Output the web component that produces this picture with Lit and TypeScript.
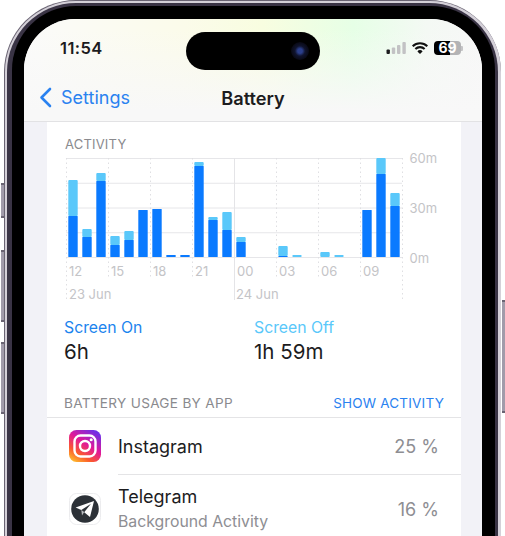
import { LitElement, html, css, svg } from "lit";
import { customElement } from "lit/decorators.js";

// [minutes-ish heights in px] dark = screen on, light = screen off (total stack)
const BARS: [number, number][] = [
  [41, 77], [20, 28], [76, 84], [12, 21], [17, 26], [47, 47], [48, 48], [2, 2],
  [2, 2], [91, 95], [37, 40], [27, 45], [15, 20], [0, 0], [0, 0], [1, 11],
  [0, 2], [0, 0], [0, 5], [0, 2], [0, 0], [47, 47], [83, 99], [51, 64],
];

const TOP = 8;
const BASE = 107;
const LEFT = 1;
const STEP = 14;

@customElement("activity-chart")
class ActivityChart extends LitElement {
  static styles = css`
    :host {
      display: block;
    }
    svg {
      display: block;
    }
    .h {
      stroke: #e6e6e9;
      stroke-width: 1;
    }
    .v {
      stroke: #dfdfe2;
      stroke-width: 1;
      stroke-dasharray: 1.5 3;
    }
    .solid {
      stroke: #e4e4e7;
      stroke-width: 1;
    }
    .on {
      fill: #0a7aff;
    }
    .off {
      fill: #5ac8fa;
    }
    text {
      font-family: Inter, "Liberation Sans", sans-serif;
      font-size: 13px;
      fill: #c4c4c7;
    }
  `;

  render() {
    const hLines = [0, 1, 2, 3, 4].map((i) => TOP + 0.5 + i * 24.75);
    const hours = ["12", "15", "18", "21", "00", "03", "06", "09"];
    return html`
      <svg width="396" height="155" viewBox="0 0 396 155">
        ${hLines.map(
          (y) => svg`<line class="h" x1=${LEFT} x2=${LEFT + 336} y1=${y} y2=${y}></line>`
        )}
        ${[0, 1, 2, 3, 4, 5, 6, 7, 8].map((i) => {
          const x = LEFT + 0.5 + i * 42;
          const long = i === 0 || i === 4 || i === 8;
          return svg`<line class=${i === 4 ? "solid" : "v"} x1=${x} x2=${x} y1=${TOP} y2=${long ? 150 : 128}></line>`;
        })}
        ${BARS.map(([on, total], i) => {
          const x = LEFT + 2.3 + i * STEP;
          return svg`
            ${total > on
              ? svg`<rect class="off" x=${x} y=${BASE - total} width="9.4" height=${total - on} rx="1"></rect>`
              : ""}
            ${on > 0
              ? svg`<rect class="on" x=${x} y=${BASE - on} width="9.4" height=${on} rx="0.5"></rect>`
              : ""}
          `;
        })}
        ${hours.map(
          (h, i) => svg`<text x=${LEFT + 3 + i * 42} y="126">${h}</text>`
        )}
        <text x=${LEFT + 3} y="149">23 Jun</text>
        <text x=${LEFT + 170} y="149">24 Jun</text>
        <text x="344.5" y="13">60m</text>
        <text x="344.5" y="63">30m</text>
        <text x="344.5" y="113">0m</text>
      </svg>
    `;
  }
}

@customElement("app-root")
class AppRoot extends LitElement {
  static styles = css`
    :host {
      display: block;
      position: relative;
      width: 505px;
      height: 536px;
      overflow: hidden;
      background: #fff;
      font-family: Inter, "Liberation Sans", sans-serif;
      color: #1c1c1e;
    }
    .btn {
      position: absolute;
      width: 3px;
      background: #a19baa;
      border-top: 2px solid #6a6473;
      border-bottom: 2px solid #6a6473;
      box-sizing: border-box;
    }
    .phone {
      box-sizing: border-box;
      margin-left: 4px;
      width: 497px;
      height: 640px;
      padding: 1px 0.5px 0 1px;
      border-radius: 72px;
      background: #6a6473;
    }
    .rim {
      box-sizing: border-box;
      height: 100%;
      padding: 2px 3px 0 2px;
      border-radius: 71px;
      background: #d4d0d8;
    }
    .rim-dark {
      box-sizing: border-box;
      height: 100%;
      padding: 3px 2.5px 0 5px;
      border-radius: 69px;
      background: #3a3445;
    }
    .bezel {
      box-sizing: border-box;
      height: 100%;
      padding: 13px 13px 0 12px;
      border-radius: 64px;
      background: #000;
    }
    .screen {
      height: 100%;
      overflow: hidden;
      border-radius: 51px 51px 0 0;
      background: #f2f2f7;
    }
    .head {
      height: 103px;
      background: linear-gradient(180deg, rgba(248, 248, 248, 0) 10%, #f8f8f8 90%),
        linear-gradient(90deg, #fbfbfa 0%, #fbfbea 35%, #f8fde0 52%, #e6ffe6 72%, #f4f9f4 88%, #f7f7f7 100%);
      border-bottom: 1px solid #e2e2e4;
      box-sizing: border-box;
    }
    .status {
      display: grid;
      grid-template-columns: 162px 134px 1fr;
      align-items: center;
      padding-top: 13px;
    }
    .time {
      padding: 0 0 6px 36px;
      font-size: 16.5px;
      font-weight: 600;
      letter-spacing: 0.4px;
    }
    .island {
      position: relative;
      height: 38px;
      border-radius: 19px;
      background: #000;
    }
    .lens {
      position: absolute;
      top: 10px;
      right: 11px;
      width: 18px;
      height: 18px;
      border-radius: 50%;
      background: radial-gradient(circle, #2b3f8c 0 18%, #10142e 40%, #07070f 75%);
    }
    .sys {
      display: flex;
      justify-content: flex-end;
      align-items: center;
      gap: 5px;
      padding: 0 19.5px 6px 0;
    }
    .battery {
      width: 27px;
      height: 14px;
      border-radius: 4px;
      background: linear-gradient(90deg, #000 0 61%, #b3b3b5 61%);
      color: #fff;
      font-size: 14px;
      font-weight: 700;
      line-height: 14px;
      text-align: center;
    }
    .nub {
      width: 1.5px;
      height: 5px;
      margin-left: -5px;
      border-radius: 0 1px 1px 0;
      background: #c4c4c6;
    }
    .nav {
      box-sizing: border-box;
      display: grid;
      grid-template-columns: 1fr auto 1fr;
      align-items: center;
      height: 52px;
      padding-top: 3px;
    }
    .back {
      display: flex;
      align-items: center;
      gap: 9px;
      padding-left: 15px;
      color: #2a82f0;
      font-size: 18px;
    }
    .title {
      font-size: 18.2px;
      font-weight: 600;
    }
    .content {
      padding: 0 21px 0 23px;
    }
    .card {
      background: #fff;
      height: 500px;
    }
    .activity {
      padding: 16px 0 0 18px;
    }
    .label {
      color: #8a8a8e;
      font-size: 13px;
      letter-spacing: 0.2px;
    }
    .activity .label {
      line-height: 12px;
    }
    .totals {
      display: grid;
      grid-template-columns: 190px 1fr;
      padding: 12px 0 0 17px;
    }
    .tname {
      font-size: 15.8px;
      line-height: 22px;
      color: #1c84ee;
    }
    .tname.off {
      color: #5ac8fa;
    }
    .tval {
      font-size: 20.5px;
      line-height: 28px;
      margin-top: -1px;
    }
    .usage-head {
      display: flex;
      justify-content: space-between;
      align-items: center;
      padding: 28px 17px 5px 17px;
      border-bottom: 1px solid #e4e4e6;
      line-height: 18px;
    }
    .usage-head .label {
      font-size: 13.6px;
      letter-spacing: 0.3px;
    }
    .action {
      font-size: 13.5px;
      color: #2a82f0;
      letter-spacing: 0.2px;
    }
    .row {
      display: flex;
      align-items: center;
      padding-left: 22px;
    }
    .row svg {
      display: block;
      flex: none;
    }
    .row-body {
      flex: 1;
      display: flex;
      align-items: center;
      justify-content: space-between;
      margin-left: 17px;
      padding-right: 22px;
      height: 56px;
    }
    .row + .row .row-body {
      height: 68px;
      border-top: 1px solid #e4e4e6;
    }
    .app {
      font-size: 18px;
      line-height: 25px;
    }
    .sub {
      font-size: 15.8px;
      line-height: 26px;
      color: #8e8e93;
    }
    .pct {
      font-size: 18px;
      color: #8e8e93;
    }
  `;

  render() {
    return html`
      <div class="btn" style="left:1px;top:183px;height:35px"></div>
      <div class="btn" style="left:1px;top:250px;height:72px"></div>
      <div class="btn" style="left:1px;top:342px;height:72px"></div>
      <div class="btn" style="left:502px;top:300px;height:113px"></div>
      <div class="phone">
        <div class="rim">
          <div class="rim-dark">
            <div class="bezel">
              <div class="screen">
                <div class="head">
                  <div class="status">
                    <div class="time">11:54</div>
                    <div class="island"><div class="lens"></div></div>
                    <div class="sys">
                      <svg width="20" height="12" viewBox="0 0 20 12">
                        <rect x="0.5" y="7.5" width="3.4" height="4.5" rx="1" fill="#1c1c1e"></rect>
                        <rect x="5.8" y="5.5" width="3.4" height="6.5" rx="1" fill="#c2c2c4"></rect>
                        <rect x="11" y="3" width="3.4" height="9" rx="1" fill="#c2c2c4"></rect>
                        <rect x="16.4" y="0" width="3.4" height="12" rx="1" fill="#c2c2c4"></rect>
                      </svg>
                      <svg width="18" height="12" viewBox="0 0 20 14">
                        <path d="M1.5 5A12 12 0 0 1 18.5 5" fill="none" stroke="#111" stroke-width="2.4"></path>
                        <path d="M4.6 8.2A7.6 7.6 0 0 1 15.4 8.2" fill="none" stroke="#111" stroke-width="2.4"></path>
                        <path d="M7 11A3.6 3.6 0 0 1 13 11L10 14Z" fill="#111"></path>
                      </svg>
                      <div class="battery">69</div>
                      <div class="nub"></div>
                    </div>
                  </div>
                  <div class="nav">
                    <div class="back">
                      <svg width="13" height="21" viewBox="0 0 13 21">
                        <path d="M11 2L2.5 10.5L11 19" fill="none" stroke="#2a82f0" stroke-width="2.6" stroke-linecap="round" stroke-linejoin="round"></path>
                      </svg>
                      <span>Settings</span>
                    </div>
                    <div class="title">Battery</div>
                    <div></div>
                  </div>
                </div>
                <div class="content">
                  <div class="card">
                    <div class="activity">
                      <div class="label">ACTIVITY</div>
                      <activity-chart></activity-chart>
                    </div>
                    <div class="totals">
                      <div>
                        <div class="tname">Screen On</div>
                        <div class="tval">6h</div>
                      </div>
                      <div>
                        <div class="tname off">Screen Off</div>
                        <div class="tval">1h 59m</div>
                      </div>
                    </div>
                    <div class="usage-head">
                      <span class="label">BATTERY USAGE BY APP</span>
                      <span class="action">SHOW ACTIVITY</span>
                    </div>
                    <div class="row">
                      <svg width="32" height="32" viewBox="0 0 32 32">
                        <defs>
                          <linearGradient id="ig" x1="0.1" y1="1" x2="0.75" y2="0">
                            <stop offset="0" stop-color="#fec52e"></stop>
                            <stop offset="0.28" stop-color="#fb5a2d"></stop>
                            <stop offset="0.6" stop-color="#e0189a"></stop>
                            <stop offset="1" stop-color="#6f2fe6"></stop>
                          </linearGradient>
                        </defs>
                        <rect width="32" height="32" rx="7.5" fill="url(#ig)"></rect>
                        <rect x="5.5" y="5.5" width="21" height="21" rx="6" fill="none" stroke="#fff" stroke-width="2.4"></rect>
                        <circle cx="16" cy="16" r="5" fill="none" stroke="#fff" stroke-width="2.4"></circle>
                        <circle cx="22.2" cy="9.8" r="1.5" fill="#fff"></circle>
                      </svg>
                      <div class="row-body">
                        <div class="app">Instagram</div>
                        <div class="pct">25 %</div>
                      </div>
                    </div>
                    <div class="row">
                      <svg width="32" height="32" viewBox="0 0 32 32">
                        <rect x="0.5" y="0.5" width="31" height="31" rx="7" fill="#fff" stroke="#ececee"></rect>
                        <circle cx="16" cy="16" r="13.8" fill="#2c3137"></circle>
                        <path d="M15.2 19L13 22.5L12.3 17Z" fill="#b9bcc0"></path>
                        <path d="M6.6 14.6L25 8L21 24L15.2 19.2L22 10.8L12.3 17Z" fill="#fff"></path>
                      </svg>
                      <div class="row-body">
                        <div>
                          <div class="app">Telegram</div>
                          <div class="sub">Background Activity</div>
                        </div>
                        <div class="pct">16 %</div>
                      </div>
                    </div>
                  </div>
                </div>
              </div>
            </div>
          </div>
        </div>
      </div>
    `;
  }
}
